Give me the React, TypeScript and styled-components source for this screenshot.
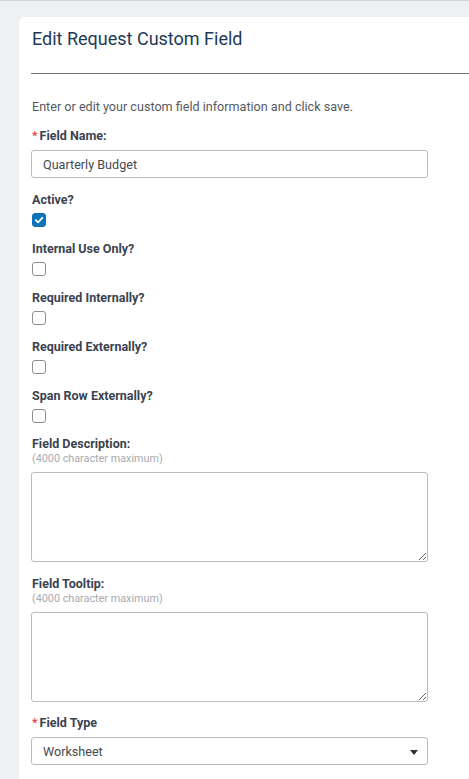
import React from "react";
import styled, { createGlobalStyle } from "styled-components";

const GlobalStyle = createGlobalStyle`
  html, body {
    margin: 0;
    padding: 0;
    background: #eef1f4;
    overflow: hidden;
  }
  body {
    font-family: Roboto, "Liberation Sans", Arial, sans-serif;
  }
`;

const Page = styled.div`
  min-height: 779px;
  border-top: 1px solid #d2d5d8;
  padding: 16px 0 0 19px;
  box-sizing: border-box;
`;

const Card = styled.div`
  background: #ffffff;
  border-top-left-radius: 6px;
  min-height: 780px;
  padding: 11px 0 0 12px;
`;

const Title = styled.h1`
  margin: 0 0 0 1px;
  font-size: 18px;
  font-weight: 400;
  line-height: 22px;
  color: #1d3a56;
`;

const Divider = styled.hr`
  margin: 23px 0 0 0;
  border: 0;
  height: 1px;
  background: #6d7178;
`;

const Intro = styled.p`
  margin: 24px 0 0 1px;
  font-size: 12.6px;
  line-height: 18px;
  color: #555a60;
`;

const Form = styled.div`
  width: 397px;
  margin-top: 12px;
  display: flex;
  flex-direction: column;
`;

const Group = styled.div<{ $gap?: number }>`
  display: flex;
  flex-direction: column;
  margin-bottom: ${(p) => p.$gap ?? 14}px;
`;

const Label = styled.label`
  display: flex;
  align-items: center;
  margin-left: 1px;
  font-size: 12.5px;
  font-weight: 700;
  line-height: 16px;
  color: #3b4350;
`;

const Required = styled.span`
  color: #e23a3f;
  font-weight: 400;
  font-size: 13px;
  margin-right: 2px;
`;

const Hint = styled.span`
  margin-left: 1px;
  font-size: 10.8px;
  line-height: 13px;
  color: #a8abb0;
`;

const TextInput = styled.div`
  margin-top: 6px;
  height: 28px;
  box-sizing: border-box;
  border: 1px solid #b9bcc0;
  border-radius: 3px;
  padding: 0 11px;
  display: flex;
  align-items: center;
  font-size: 12.6px;
  color: #454a50;
`;

const Select = styled(TextInput)`
  justify-content: space-between;
  padding-right: 9px;
`;

const Caret = styled.span`
  width: 0;
  height: 0;
  border-left: 4.5px solid transparent;
  border-right: 4.5px solid transparent;
  border-top: 5px solid #2e3135;
  margin-top: 2px;
`;

const TextArea = styled.textarea`
  margin-top: 7px;
  width: 397px;
  height: 90px;
  box-sizing: border-box;
  border: 1px solid #b9bcc0;
  border-radius: 3px;
  resize: both;
  font-family: inherit;
`;

const Box = styled.span<{ $checked?: boolean }>`
  margin: 5px 0 0 1px;
  width: 14px;
  height: 14px;
  box-sizing: border-box;
  border-radius: 3px;
  border: 1px solid ${(p) => (p.$checked ? "#0f72b7" : "#8c8f93")};
  background: ${(p) => (p.$checked ? "#0f72b7" : "#ffffff")};
  display: flex;
  align-items: center;
  justify-content: center;
`;

const Checkbox = ({ checked }: { checked?: boolean }) => (
  <Box $checked={checked}>
    {checked && (
      <svg width="10" height="10" viewBox="0 0 10 10">
        <path
          d="M1.8 5.2 L4 7.3 L8.3 2.8"
          fill="none"
          stroke="#ffffff"
          strokeWidth="1.8"
          strokeLinecap="round"
          strokeLinejoin="round"
        />
      </svg>
    )}
  </Box>
);

const flags = [
  { label: "Active?", checked: true },
  { label: "Internal Use Only?" },
  { label: "Required Internally?" },
  { label: "Required Externally?" },
  { label: "Span Row Externally?" },
];

export default function App() {
  return (
    <>
      <GlobalStyle />
      <Page>
        <Card>
          <Title>Edit Request Custom Field</Title>
          <Divider />
          <Intro>Enter or edit your custom field information and click save.</Intro>
          <Form>
            <Group>
              <Label>
                <Required>*</Required>Field Name:
              </Label>
              <TextInput>Quarterly Budget</TextInput>
            </Group>
            {flags.map((f, i) => (
              <Group key={f.label} $gap={i === flags.length - 1 ? 13 : 14}>
                <Label>{f.label}</Label>
                <Checkbox checked={f.checked} />
              </Group>
            ))}
            <Group>
              <Label>Field Description:</Label>
              <Hint>(4000 character maximum)</Hint>
              <TextArea />
            </Group>
            <Group $gap={13}>
              <Label>Field Tooltip:</Label>
              <Hint>(4000 character maximum)</Hint>
              <TextArea />
            </Group>
            <Group>
              <Label>
                <Required>*</Required>Field Type
              </Label>
              <Select>
                Worksheet
                <Caret />
              </Select>
            </Group>
          </Form>
        </Card>
      </Page>
    </>
  );
}
